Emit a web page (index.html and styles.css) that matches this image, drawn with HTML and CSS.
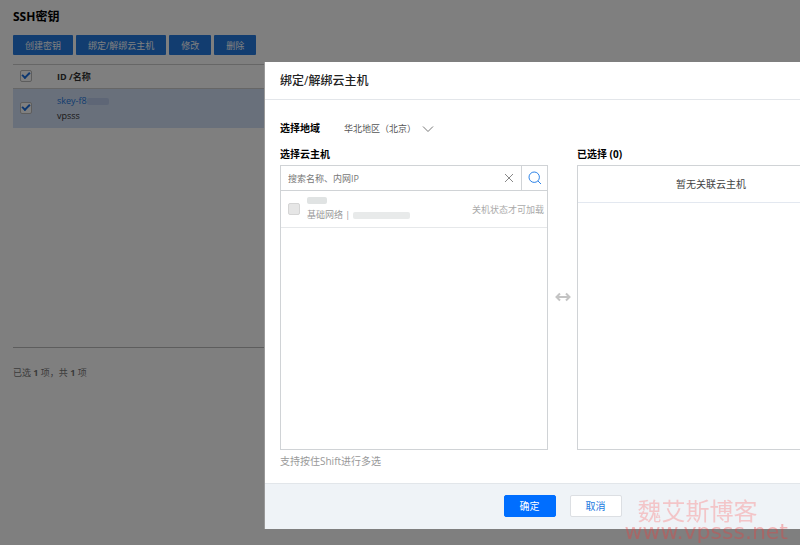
FILE: index.html
```html
<!DOCTYPE html>
<html lang="zh-CN">

<head>
    <meta charset="UTF-8">
    <meta name="viewport" content="width=device-width, initial-scale=1.0">
    <title>SSH密钥</title>
    <link rel="stylesheet" href="styles.css">
</head>

<body>
    <main class="page">
        <h1>SSH密钥</h1>
        <div class="toolbar">
            <button class="btn-tool">创建密钥</button>
            <button class="btn-tool">绑定/解绑云主机</button>
            <button class="btn-tool">修改</button>
            <button class="btn-tool">删除</button>
        </div>
        <div class="table-wrap">
            <table class="keys">
                <thead>
                    <tr>
                        <th class="col-check"><input type="checkbox" class="check" aria-label="全选" checked></th>
                        <th>ID /名称</th>
                    </tr>
                </thead>
                <tbody>
                    <tr>
                        <td class="col-check"><input type="checkbox" class="check" aria-label="vpsss" checked></td>
                        <td>
                            <a href="#key">skey-f8<span class="mask mask-key"></span></a>
                            <p>vpsss</p>
                        </td>
                    </tr>
                </tbody>
            </table>
        </div>
        <p class="total">已选 <b>1</b> 项，共 <b>1</b> 项</p>
    </main>

    <div class="overlay">
        <section class="dialog" role="dialog" aria-labelledby="dialog-title">
            <h2 class="dialog-head" id="dialog-title">绑定/解绑云主机</h2>
            <div class="dialog-body">
                <div class="region">
                    <label for="region">选择地域</label>
                    <div class="region-select">
                        <select id="region">
                            <option>华北地区（北京）</option>
                        </select>
                        <svg width="12" height="8" viewBox="0 0 12 8"><path d="M1 1.5l5 5 5-5" /></svg>
                    </div>
                </div>
                <div class="transfer">
                    <div class="col">
                        <h3>选择云主机</h3>
                        <div class="panel">
                            <div class="search">
                                <input type="text" placeholder="搜索名称、内网IP" aria-label="搜索名称、内网IP">
                                <button class="clear" aria-label="清空">
                                    <svg width="10" height="10" viewBox="0 0 10 10"><path d="M1 1l8 8M9 1L1 9" /></svg>
                                </button>
                                <button class="find" aria-label="搜索">
                                    <svg width="14" height="14" viewBox="0 0 14 14"><circle cx="6.2" cy="6.2" r="5.2" /><path d="M10 10l3 3" /></svg>
                                </button>
                            </div>
                            <label class="host">
                                <input type="checkbox" class="check" disabled>
                                <span class="host-info">
                                    <span class="mask mask-name"></span>
                                    <span>基础网络 | <span class="mask mask-ip"></span></span>
                                </span>
                                <span class="host-tip">关机状态才可加载</span>
                            </label>
                        </div>
                    </div>
                    <svg class="swap" width="16" height="10" viewBox="0 0 16 10"><path d="M1.5 5h13M5 1.5L1.5 5 5 8.5M11 1.5L14.5 5 11 8.5" /></svg>
                    <div class="col">
                        <h3>已选择 (0)</h3>
                        <div class="panel">
                            <p class="empty">暂无关联云主机</p>
                        </div>
                    </div>
                </div>
                <p class="hint">支持按住Shift进行多选</p>
            </div>
            <div class="dialog-foot">
                <button class="btn btn-primary">确定</button>
                <button class="btn">取消</button>
            </div>
        </section>
    </div>

    <div class="watermark">
        <p>魏艾斯博客</p>
        <p class="site">www.vpsss.net</p>
    </div>
</body>

</html>
```
FILE: styles.css
```css
*,
*::after {
    box-sizing: border-box;
}

body {
    margin: 0;
    background-color: #fff;
    color: #333;
    font: 9px/15px "Open Sans", "Noto Sans CJK SC", sans-serif;
}

h1,
h2,
h3,
p {
    margin: 0;
}

button,
input,
select {
    margin: 0;
    padding: 0;
    border: none;
    background: none;
    color: inherit;
    font: inherit;
}

button {
    cursor: pointer;
}

svg {
    display: block;
    flex: none;
    fill: none;
    stroke: #777;
}

.page {
    padding: 8px 13px;
}

.page h1 {
    color: #000;
    font-size: 12px;
    line-height: 17px;
}

.toolbar {
    display: flex;
    gap: 3px;
    margin: 10px 0 9px;
}

.btn-tool {
    height: 20px;
    padding: 0 12px;
    border-radius: 1px;
    background-color: #247ae0;
    color: #fff;
}

.table-wrap {
    min-height: 284px;
    border-top: 1px solid #ccc;
    border-bottom: 1px solid #bbb;
}

.keys {
    width: 100%;
    border-collapse: collapse;
    text-align: left;
}

.keys th {
    height: 23px;
    padding: 0;
    border-bottom: 1px solid #ccc;
}

.keys td {
    height: 40px;
    padding: 0;
    background-color: #d3e0f6;
}

.keys .col-check {
    width: 44px;
    padding-left: 7px;
}

.keys a {
    color: #247ae0;
    text-decoration: none;
}

.check {
    display: block;
    flex: none;
    width: 12px;
    height: 12px;
    border: 1px solid #bbb;
    border-radius: 2px;
    background-color: #fff;
    appearance: none;
}

.check:checked::after {
    content: '';
    display: block;
    width: 8px;
    height: 5px;
    margin: 1px;
    border-bottom: 2px solid #1a6fe0;
    border-left: 2px solid #1a6fe0;
    transform: rotate(-45deg);
}

.check:disabled {
    border-color: #d5d5d5;
    background-color: #e6e6e6;
}

.mask {
    display: inline-block;
    height: 7px;
    border-radius: 2px;
    background-color: #e0e3e3;
    vertical-align: middle;
}

.mask-key {
    width: 22px;
    background-color: #bccdec;
}

.mask-name {
    width: 20px;
}

.mask-ip {
    width: 57px;
    background-color: #e8eaea;
}

.total {
    margin-top: 17px;
    color: #777;
}

.overlay {
    position: fixed;
    inset: 0;
    overflow: hidden;
    padding: 62px 0 0 33%;
    background-color: rgba(0, 0, 0, .5);
}

.dialog {
    width: 596px;
    border-left: 1px solid #999;
    background-color: #fff;
}

.dialog-head {
    padding: 10px 15px;
    border-bottom: 1px solid #e3e6ea;
    color: #222;
    font-size: 12px;
    font-weight: 500;
    line-height: 17px;
}

.dialog-body {
    padding: 20px 15px 14px;
}

.region,
.region-select {
    display: flex;
    align-items: center;
}

.region {
    gap: 24px;
}

.region label,
.col h3 {
    color: #000;
    font-size: 10px;
    font-weight: 700;
    line-height: 17px;
}

.region-select {
    gap: 5px;
}

.region-select select {
    color: #555;
    appearance: none;
}

.transfer {
    display: flex;
    align-items: flex-end;
    margin-top: 9px;
}

.col {
    flex: 1;
}

.col h3 {
    margin-bottom: 2px;
}

.panel {
    height: 285px;
    border: 1px solid #d0d3d6;
}

.search {
    display: flex;
    height: 25px;
    border-bottom: 1px solid #d0d3d6;
}

.search input {
    flex: 1;
    min-width: 0;
    padding-left: 7px;
    outline: none;
}

.search input::placeholder {
    color: #777;
}

.search button {
    display: flex;
    align-items: center;
    justify-content: center;
    width: 24px;
}

.search .find {
    width: 26px;
    border-left: 1px solid #d0d3d6;
}

.clear svg {
    stroke: #888;
}

.find svg {
    stroke: #2c83e8;
}

.host {
    display: flex;
    align-items: center;
    height: 37px;
    padding: 0 3px 0 7px;
    border-bottom: 1px solid #e6e8ea;
    color: #999;
}

.host-info {
    display: flex;
    flex: 1;
    flex-direction: column;
    gap: 4px;
    margin-left: 7px;
    line-height: 13px;
}

.host-tip {
    color: #aaa;
}

.swap {
    margin: 0 6px 148px 7px;
    stroke: #c4c4c4;
    stroke-width: 2;
}

.empty {
    padding: 10px 0;
    border-bottom: 1px solid #e3e8f0;
    color: #444;
    font-size: 10px;
    line-height: 16px;
    text-align: center;
}

.hint {
    margin-top: 4px;
    color: #999;
    font-size: 10px;
    line-height: 15px;
}

.dialog-foot {
    display: flex;
    justify-content: center;
    gap: 14px;
    padding: 11px 0 12px;
    border-top: 1px solid #e2e6ea;
    background-color: #eff3f7;
}

.btn {
    width: 52px;
    height: 22px;
    border: 1px solid #dcdfe3;
    border-radius: 2px;
    background-color: #fff;
    color: #1a78e0;
    font-size: 10px;
}

.btn-primary {
    border-color: #006eff;
    background-color: #006eff;
    color: #fff;
}

.watermark {
    position: fixed;
    right: 12px;
    bottom: 2px;
    color: rgba(255, 60, 60, .25);
    font-size: 24px;
    line-height: 20px;
    pointer-events: none;
}

.watermark p {
    padding-left: 13px;
}

.watermark .site {
    padding-left: 0;
    color: rgba(240, 60, 60, .35);
    font: 22px/22px "DejaVu Sans", sans-serif;
}
```
